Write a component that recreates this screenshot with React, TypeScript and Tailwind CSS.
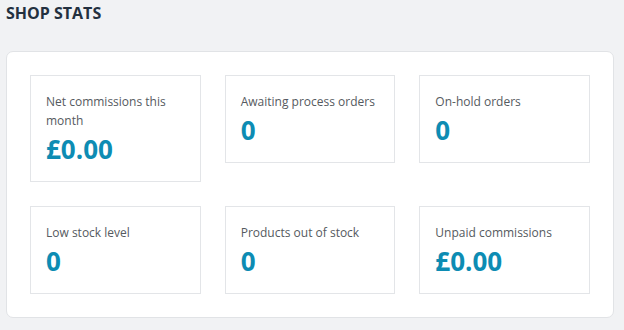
import React from "react";

const stats = [
  { label: "Net commissions this month", value: "£0.00" },
  { label: "Awaiting process orders", value: "0" },
  { label: "On-hold orders", value: "0" },
  { label: "Low stock level", value: "0" },
  { label: "Products out of stock", value: "0" },
  { label: "Unpaid commissions", value: "£0.00" },
];

export default function App() {
  return (
    <div
      className="w-[624px] h-[330px] bg-[#f1f2f4] px-[6px] pt-[1px]"
      style={{ fontFamily: '"Open Sans", "Liberation Sans", sans-serif' }}
    >
      <h1 className="text-[16px] leading-[24px] font-bold text-[#23303f]">SHOP STATS</h1>
      <div className="mt-[26px] w-[608px] bg-white border border-[#e1e3e6] rounded-[7px] p-[23px]">
        <div className="grid grid-cols-3 gap-[24px] items-start">
          {stats.map((s) => (
            <div
              key={s.label}
              className="border border-[#e3e5e8] bg-white pl-[15px] pr-[12px] pt-[16px] pb-[16px]"
            >
              <div className="text-[12px] leading-[19px] text-[#555a60]">{s.label}</div>
              <div className="mt-[4px] text-[26px] leading-[31px] font-bold text-[#0d8cb3]">
                {s.value}
              </div>
            </div>
          ))}
        </div>
      </div>
    </div>
  );
}
